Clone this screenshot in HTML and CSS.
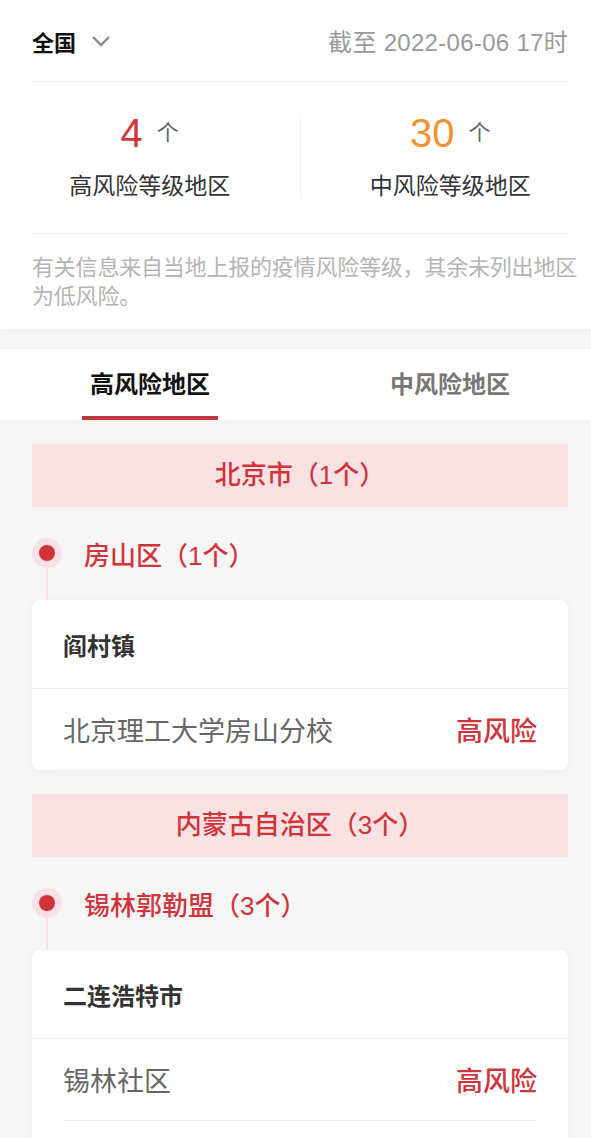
FILE: index.html
```html
<!DOCTYPE html>
<html lang="zh-CN">
    <head>
        <meta charset="utf-8" />
        <meta name="viewport" content="width=device-width, initial-scale=1" />
        <title>风险等级查询</title>
        <link rel="stylesheet" href="styles.css">
    </head>
    <body>
        <div class="page">
            <section class="summary">
                <div class="top-bar">
                    <div class="region">
                        全国
                        <svg class="chevron" width="20" height="12" viewBox="0 0 20 12">
                            <polyline points="2,2 10,10 18,2" fill="none" stroke="#8a8a8a" stroke-width="2.4" />
                        </svg>
                    </div>
                    <div class="update">截至 2022-06-06 17时</div>
                </div>

                <div class="stats">
                    <div class="stat">
                        <div class="stat-num"><span class="num high">4</span><span class="unit">个</span></div>
                        <div class="stat-label">高风险等级地区</div>
                    </div>
                    <div class="stat">
                        <div class="stat-num"><span class="num mid">30</span><span class="unit">个</span></div>
                        <div class="stat-label">中风险等级地区</div>
                    </div>
                </div>

                <p class="note">有关信息来自当地上报的疫情风险等级，其余未列出地区为低风险。</p>
            </section>

            <nav class="tabs">
                <a class="tab active"><span>高风险地区</span></a>
                <a class="tab"><span>中风险地区</span></a>
            </nav>

            <main class="list">
                <div class="province">北京市（1个）</div>
                <div class="district"><span class="dot"></span>房山区（1个）</div>
                <div class="card">
                    <div class="card-head">阎村镇</div>
                    <div class="card-row">
                        <span>北京理工大学房山分校</span>
                        <span class="level">高风险</span>
                    </div>
                </div>

                <div class="province">内蒙古自治区（3个）</div>
                <div class="district"><span class="dot"></span>锡林郭勒盟（3个）</div>
                <div class="card">
                    <div class="card-head">二连浩特市</div>
                    <div class="card-row">
                        <span>锡林社区</span>
                        <span class="level">高风险</span>
                    </div>
                    <div class="card-row">
                        <span>额尔敦社区</span>
                        <span class="level">高风险</span>
                    </div>
                    <div class="card-row">
                        <span>金叶社区</span>
                        <span class="level">高风险</span>
                    </div>
                </div>
            </main>
        </div>
    </body>
</html>
```

FILE: styles.css
```css
body {
    margin: 0;
    background-color: #f6f6f6;
    color: #333;
    font-family: "Liberation Sans", "Noto Sans CJK SC", sans-serif;
    overflow-x: hidden;
}
.page {
    width: 600px;
}
.summary {
    background-color: #fff;
    padding: 0 32px;
    box-shadow: 0 2px 6px rgba(0, 0, 0, 0.03);
}
.top-bar {
    height: 81px;
    display: flex;
    align-items: center;
    justify-content: space-between;
    border-bottom: 1px solid #f0f0f0;
}
.region {
    display: flex;
    align-items: center;
    gap: 15px;
    font-size: 22px;
    font-weight: bold;
    color: #111;
}
.update {
    font-size: 24px;
    letter-spacing: 0.3px;
    color: #9a9a9a;
}
.stats {
    display: flex;
    margin: 0 -32px;
    padding: 36px 0;
    position: relative;
}
.stats::after {
    content: '';
    position: absolute;
    left: 32px;
    right: 32px;
    bottom: 0;
    height: 1px;
    background-color: #f0f0f0;
}
.stat {
    flex: 1;
    text-align: center;
}
.stat + .stat {
    border-left: 1px solid #f0f0f0;
}
.stat-num {
    height: 30px;
    line-height: 30px;
}
.num {
    font-size: 40px;
    margin-right: 14px;
    vertical-align: -1px;
}
.num.high {
    color: #d3343b;
}
.num.mid {
    color: #f3922f;
}
.unit {
    font-size: 22px;
    color: #666;
    vertical-align: 6px;
}
.stat-label {
    margin-top: 26px;
    font-size: 23px;
    line-height: 24px;
    color: #333;
}
.note {
    margin: 0 -14px 0 0;
    padding: 19px 0 18px;
    font-size: 22px;
    line-height: 29px;
    letter-spacing: -0.2px;
    color: #b4b4b4;
}
.tabs {
    display: flex;
    margin-top: 20px;
    height: 71px;
    background-color: #fff;
}
.tab {
    flex: 1;
    display: flex;
    flex-direction: column;
    align-items: center;
    padding-top: 22px;
    box-sizing: border-box;
    font-size: 24px;
    font-weight: bold;
    line-height: 28px;
    color: #777;
}
.tab.active {
    color: #111;
}
.tab.active::after {
    content: '';
    width: 136px;
    height: 4px;
    margin-top: auto;
    background-color: #c0393f;
}
.list {
    padding: 24px 32px;
}
.province {
    height: 63px;
    line-height: 63px;
    text-align: center;
    background-color: #fae1e3;
    color: #d0343a;
    font-size: 26px;
    font-weight: 500;
}
.district {
    display: flex;
    align-items: center;
    gap: 22px;
    height: 30px;
    margin-top: 31px;
    color: #d0343a;
    font-size: 26px;
    font-weight: 500;
}
.dot {
    position: relative;
    width: 30px;
    height: 30px;
    border-radius: 50%;
    background-color: #fbe1e3;
    display: flex;
    align-items: center;
    justify-content: center;
}
.dot::before {
    content: '';
    width: 16px;
    height: 16px;
    border-radius: 50%;
    background-color: #d0343a;
}
.dot::after {
    content: '';
    position: absolute;
    left: 14px;
    top: 30px;
    width: 2px;
    height: 32px;
    background-color: #fbe1e3;
}
.card {
    margin-top: 32px;
    margin-bottom: 24px;
    background-color: #fff;
    border-radius: 8px;
    box-shadow: 0 2px 12px rgba(0, 0, 0, 0.04);
    overflow: hidden;
}
.card-head {
    height: 88px;
    display: flex;
    align-items: center;
    padding: 0 31px;
    border-bottom: 1px solid #f0f0f0;
    font-size: 24px;
    font-weight: bold;
    color: #333;
}
.card-row {
    height: 81px;
    margin: 0 31px;
    display: flex;
    align-items: center;
    justify-content: space-between;
    font-size: 27px;
    color: #666;
}
.card-row + .card-row {
    border-top: 1px solid #f0f0f0;
}
.level {
    color: #d0343a;
    font-weight: 500;
}
```
